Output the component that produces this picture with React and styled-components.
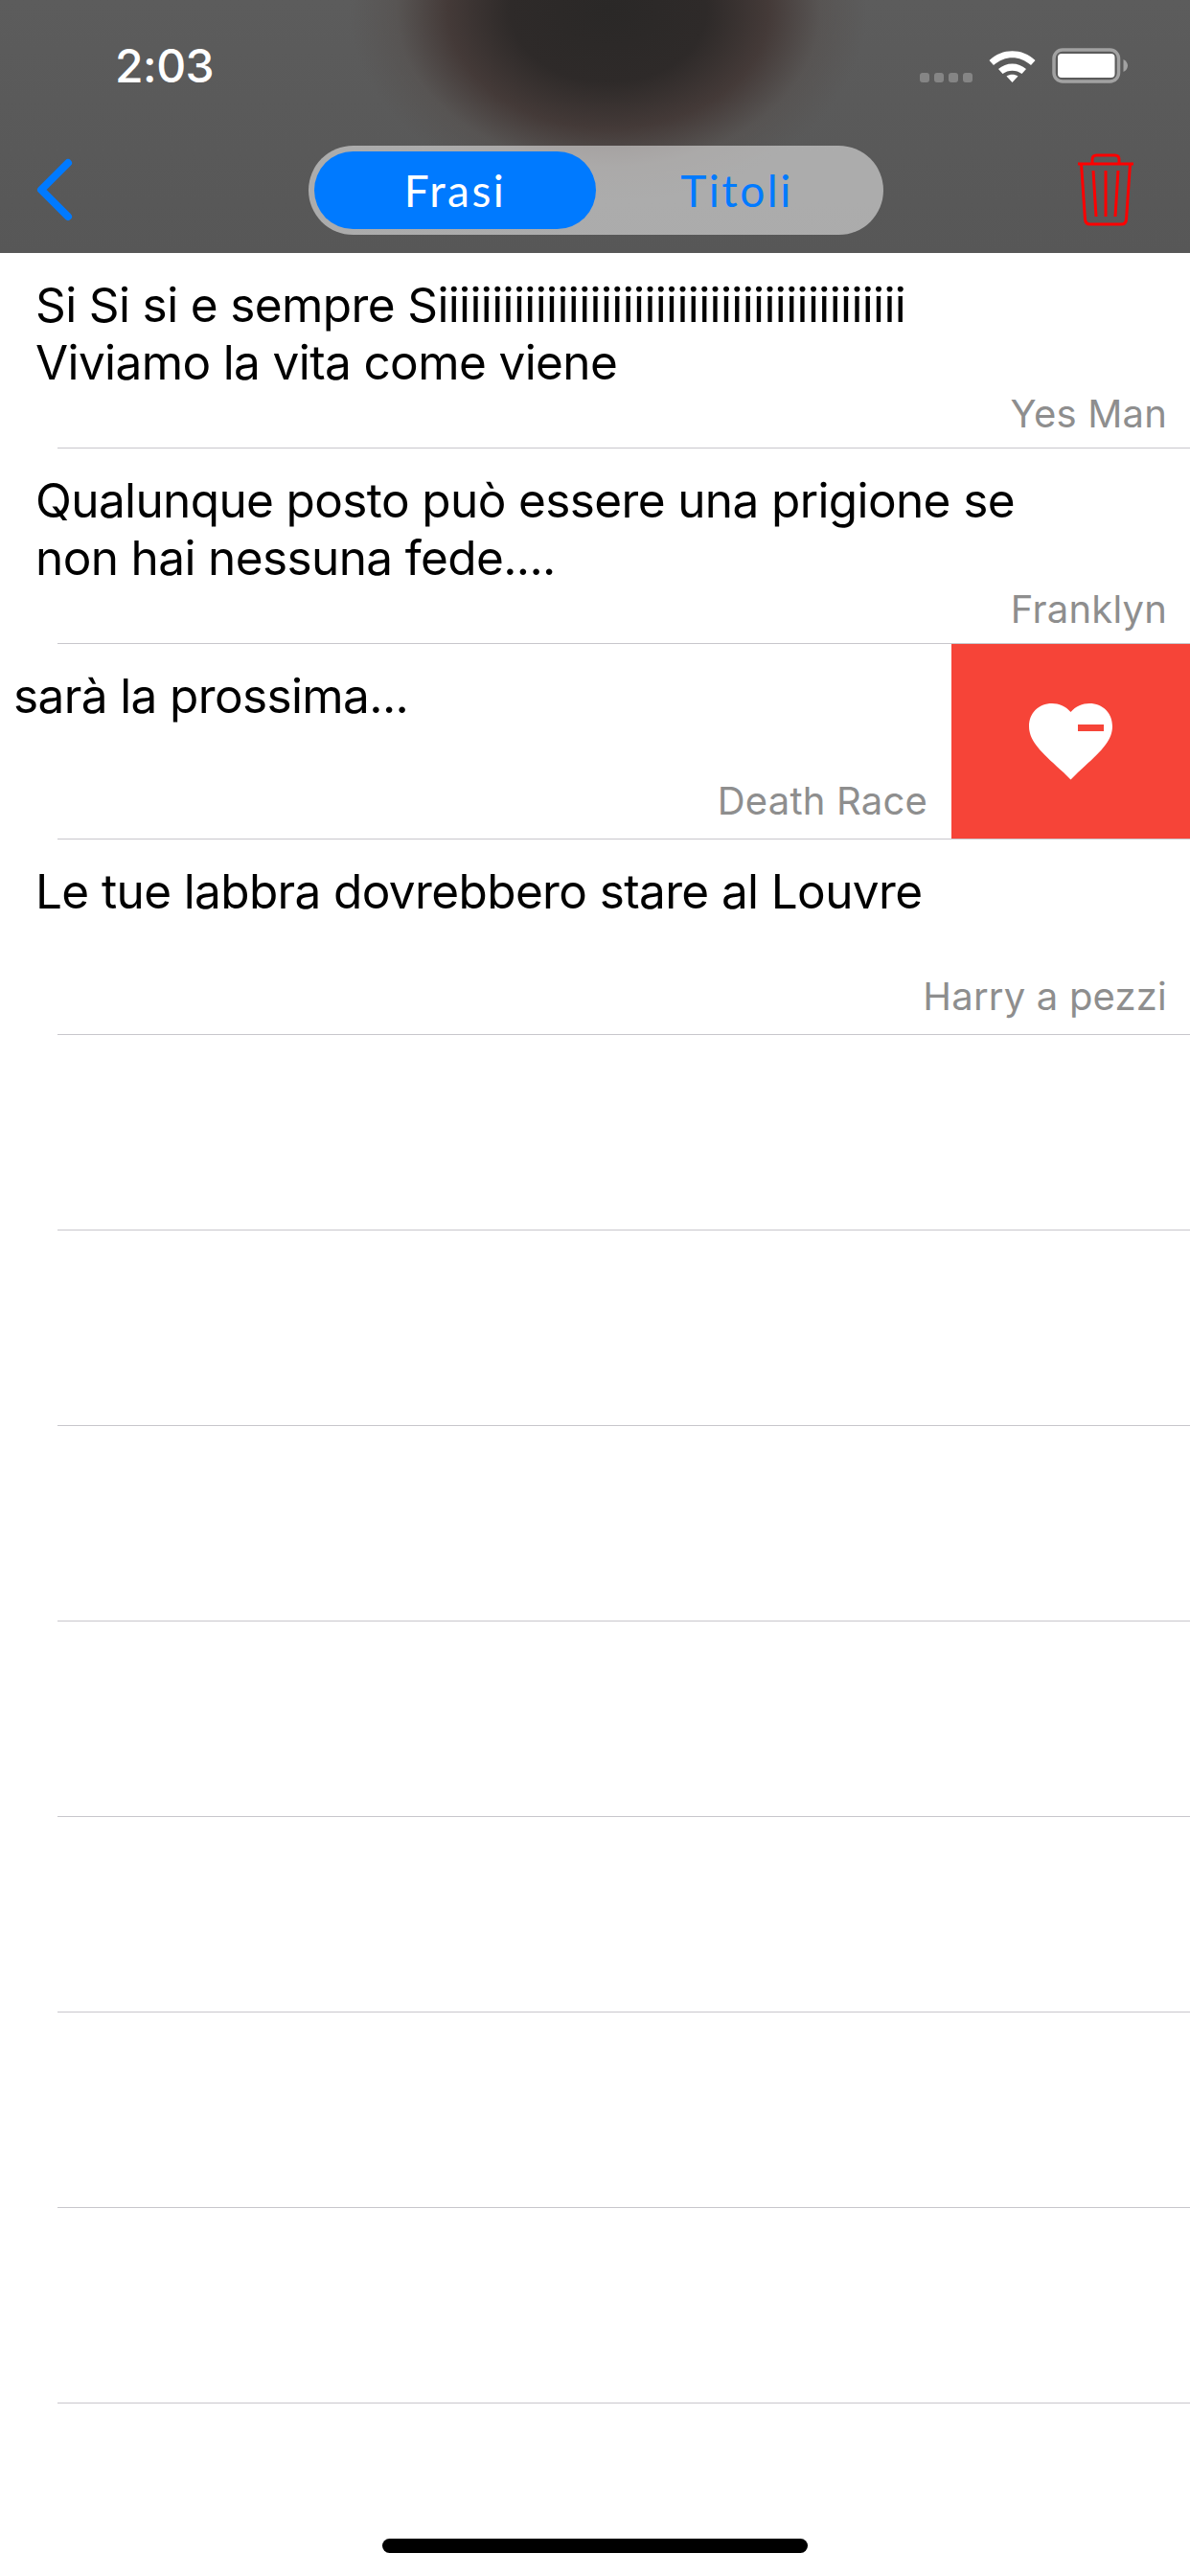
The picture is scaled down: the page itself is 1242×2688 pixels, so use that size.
import React from "react";
import styled, { createGlobalStyle } from "styled-components";

const GlobalStyle = createGlobalStyle`
  html, body {
    margin: 0;
    padding: 0;
    background: #fff;
  }
`;

const Screen = styled.div`
  position: relative;
  width: 1242px;
  height: 2688px;
  overflow: hidden;
  background: #fff;
  font-family: Inter, "Liberation Sans", sans-serif;
`;

const Header = styled.header`
  height: 264px;
  background:
    radial-gradient(ellipse 270px 200px at 635px 10px, #2a2827 0%, #2e2a29 38%, #443a38 62%, rgba(85, 80, 78, 0.6) 82%, rgba(90, 90, 90, 0) 100%),
    linear-gradient(#5c5c5c, #575757);
`;

const StatusBar = styled.div`
  display: flex;
  align-items: center;
  justify-content: space-between;
  height: 132px;
  padding: 4px 65px 0 120px;
  box-sizing: border-box;
`;

const Clock = styled.div`
  color: #fff;
  font-size: 48px;
  font-weight: 500;
  letter-spacing: -0.5px;
`;

const StatusIcons = styled.div`
  display: flex;
  align-items: center;
  gap: 17px;
`;

const NavBar = styled.div`
  display: flex;
  align-items: center;
  height: 132px;
  padding-left: 38px;
`;

const Segment = styled.div`
  display: flex;
  width: 600px;
  height: 93px;
  margin-left: 246px;
  padding: 6px;
  box-sizing: border-box;
  border-radius: 47px;
  background: rgba(255, 255, 255, 0.5);
`;

const SegmentItem = styled.div`
  display: flex;
  flex: 1;
  align-items: center;
  justify-content: center;
  border-radius: 41px;
  background: ${(p) => (p.$active ? "#007aff" : "transparent")};
  color: ${(p) => (p.$active ? "#fff" : "#007aff")};
  font-family: Lato, "Liberation Sans", sans-serif;
  font-size: 46px;
  letter-spacing: 2.5px;
`;

const Trash = styled.div`
  display: flex;
  margin-left: auto;
  margin-right: 59px;
`;

const Row = styled.div`
  display: flex;
  height: 203px;
`;

const RowBody = styled.div`
  display: flex;
  flex: 1;
  min-width: 0;
  flex-direction: column;
  padding: ${(p) => (p.$swiped ? "24px 25px 0 14px" : "24px 24px 0 37px")};
`;

const Quote = styled.div`
  flex: 1;
  color: #000;
  font-size: 49.5px;
  line-height: 60px;
  letter-spacing: -0.62px;
`;

const Movie = styled.div`
  padding-bottom: 15px;
  color: #8e8e8e;
  font-size: 40px;
  line-height: 48px;
  letter-spacing: 0.2px;
  text-align: right;
`;

const SwipeAction = styled.div`
  display: flex;
  flex: none;
  align-items: center;
  justify-content: center;
  width: 249px;
  background: #f64438;
`;

const Separator = styled.div`
  height: 1px;
  margin-left: 60px;
  background: #c8c7cc;
`;

const HomeIndicator = styled.div`
  position: absolute;
  left: 399px;
  bottom: 24px;
  width: 444px;
  height: 15px;
  border-radius: 8px;
  background: #000;
`;

const rows = [
  { quote: ["Si Si si e sempre Siiiiiiiiiiiiiiiiiiiiiiiiiiiiiiiiiiiiiiiiiii", "Viviamo la vita come viene"], movie: "Yes Man" },
  { quote: ["Qualunque posto può essere una prigione se", "non hai nessuna fede...."], movie: "Franklyn" },
  { quote: ["sarà la prossima..."], movie: "Death Race", swiped: true },
  { quote: ["Le tue labbra dovrebbero stare al Louvre"], movie: "Harry a pezzi" },
  { quote: [] },
  { quote: [] },
  { quote: [] },
  { quote: [] },
  { quote: [] },
  { quote: [] },
  { quote: [] },
  { quote: [] },
];

const WifiIcon = () => (
  <svg width="49" height="36" viewBox="0 0 49 36">
    <path d="M0.5 13 C14 0 35 0 48.500 13 L44 18 C32 7.500 17 7.500 5 18 Z" fill="#fff" />
    <path d="M10 22 C18 14.500 31 14.500 39 22 L34.500 27 C29 22.500 20 22.500 14.500 27 Z" fill="#fff" />
    <path d="M18.500 29.500 C22 27 27 27 30.500 29.500 L24.500 36 Z" fill="#fff" />
  </svg>
);

const BatteryIcon = () => (
  <svg width="79" height="37" viewBox="0 0 79 37">
    <rect x="2" y="2" width="67.500" height="33" rx="9" fill="none" stroke="#a2a2a2" strokeWidth="3.500" />
    <rect x="6" y="6" width="59.500" height="25" rx="4" fill="#fff" />
    <path d="M74.500 12 C77.500 13.500 79 16 79 18.500 C79 21 77.500 23.500 74.500 25 Z" fill="#a2a2a2" />
  </svg>
);

const SignalDots = () => (
  <svg width="55" height="10" viewBox="0 0 55 10" style={{ marginTop: 26 }}>
    {[0, 15, 30, 45].map((x) => (
      <rect key={x} x={x} y="0" width="10" height="10" rx="3" fill="#858585" />
    ))}
  </svg>
);

const BackIcon = () => (
  <svg width="38" height="66" viewBox="0 0 38 66">
    <path d="M33 5 L5 33 L33 61" fill="none" stroke="#007aff" strokeWidth="8" strokeLinecap="round" strokeLinejoin="round" />
  </svg>
);

const TrashIcon = () => (
  <svg width="58" height="76" viewBox="0 0 58 76">
    <g fill="none" stroke="#f00" strokeWidth="3">
      <path d="M0 11 H58" />
      <path d="M15 10 V6.500 Q15 2 19.500 2 H38.500 Q43 2 43 6.500 V10" />
      <path d="M3.500 11 L7.500 69 Q8 74 12.500 74 H45.500 Q50 74 50.500 69 L54.500 11" />
      <path d="M16 18 L19 66" />
      <path d="M29 18 V66" />
      <path d="M42 18 L39 66" />
    </g>
  </svg>
);

const HeartMinusIcon = () => (
  <svg width="87" height="80" viewBox="0 0 87 80">
    <path d="M43.500 79.500 L36 72 C14 52 0 40 0 24 C0 10 10 0 24 0 C31 0 38.500 3 43.500 9 C48.500 3 56 0 63 0 C77 0 87 10 87 24 C87 40 73 52 51 72 Z" fill="#fff" />
    <rect x="51" y="22" width="27" height="7" fill="#f64438" />
  </svg>
);

export default function App() {
  return (
    <>
      <GlobalStyle />
      <Screen>
        <Header>
          <StatusBar>
            <Clock>2:03</Clock>
            <StatusIcons>
              <SignalDots />
              <WifiIcon />
              <BatteryIcon />
            </StatusIcons>
          </StatusBar>
          <NavBar>
            <BackIcon />
            <Segment>
              <SegmentItem $active>Frasi</SegmentItem>
              <SegmentItem>Titoli</SegmentItem>
            </Segment>
            <Trash>
              <TrashIcon />
            </Trash>
          </NavBar>
        </Header>
        {rows.map((row, i) => (
          <React.Fragment key={i}>
            <Row>
              <RowBody $swiped={row.swiped}>
                <Quote>
                  {row.quote.map((line) => (
                    <div key={line}>{line}</div>
                  ))}
                </Quote>
                {row.movie && <Movie>{row.movie}</Movie>}
              </RowBody>
              {row.swiped && (
                <SwipeAction>
                  <HeartMinusIcon />
                </SwipeAction>
              )}
            </Row>
            <Separator />
          </React.Fragment>
        ))}
        <HomeIndicator />
      </Screen>
    </>
  );
}
